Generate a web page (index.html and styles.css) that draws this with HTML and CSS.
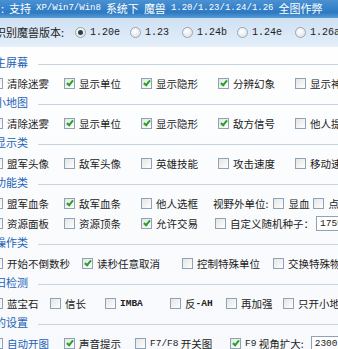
FILE: index.html
```html
<!DOCTYPE html>
<html lang="zh-CN">
<head>
    <meta charset="UTF-8">
    <title>魔兽全图作弊</title>
    <link rel="stylesheet" href="styles.css">
</head>
<body>
    <div class="window">
        <div class="titlebar">
            <span>:</span>
            <span>支持</span>
            <span class="mono">XP/Win7/Win8</span>
            <span>系统下</span>
            <span>魔兽</span>
            <span class="mono">1.20/1.23/1.24/1.26</span>
            <span>全图作弊</span>
        </div>
        <div class="versions">
            <span class="ver-label">识别魔兽版本:</span>
            <label class="radio-item"><span class="radio on"></span><span class="mono">1.20e</span></label>
            <label class="radio-item"><span class="radio"></span><span class="mono">1.23</span></label>
            <label class="radio-item"><span class="radio"></span><span class="mono">1.24b</span></label>
            <label class="radio-item"><span class="radio"></span><span class="mono">1.24e</span></label>
            <label class="radio-item"><span class="radio"></span><span class="mono">1.26a</span></label>
        </div>

        <div class="content">
            <div class="sec"><span class="sec-title">主屏幕</span><span class="sec-line"></span></div>
            <div class="row cols-main">
                <label class="opt"><span class="cb"></span>清除迷雾</label>
                <label class="opt"><span class="cb on"></span>显示单位</label>
                <label class="opt"><span class="cb on"></span>显示隐形</label>
                <label class="opt"><span class="cb on"></span>分辨幻象</label>
                <label class="opt"><span class="cb"></span>显示神符</label>
            </div>

            <div class="sec"><span class="sec-title">小地图</span><span class="sec-line"></span></div>
            <div class="row cols-main">
                <label class="opt"><span class="cb"></span>清除迷雾</label>
                <label class="opt"><span class="cb on"></span>显示单位</label>
                <label class="opt"><span class="cb on"></span>显示隐形</label>
                <label class="opt"><span class="cb on"></span>敌方信号</label>
                <label class="opt"><span class="cb"></span>他人提示</label>
            </div>

            <div class="sec"><span class="sec-title">显示类</span><span class="sec-line"></span></div>
            <div class="row cols-main">
                <label class="opt"><span class="cb"></span>盟军头像</label>
                <label class="opt"><span class="cb"></span>敌军头像</label>
                <label class="opt"><span class="cb"></span>英雄技能</label>
                <label class="opt"><span class="cb"></span>攻击速度</label>
                <label class="opt"><span class="cb"></span>移动速度</label>
            </div>

            <div class="sec"><span class="sec-title">功能类</span><span class="sec-line"></span></div>
            <div class="row cols-main">
                <label class="opt"><span class="cb"></span>盟军血条</label>
                <label class="opt"><span class="cb on"></span>敌军血条</label>
                <label class="opt"><span class="cb"></span>他人选框</label>
                <div class="opt view-out">
                    <span class="gap5">视野外单位:</span>
                    <label class="opt gap4"><span class="cb"></span>显血</label>
                    <label class="opt"><span class="cb"></span>点选</label>
                </div>
            </div>
            <div class="row cols-main">
                <label class="opt"><span class="cb"></span>资源面板</label>
                <label class="opt"><span class="cb"></span>资源顶条</label>
                <label class="opt"><span class="cb on"></span>允许交易</label>
                <div class="opt seed">
                    <span class="cb"></span><span>自定义随机种子：</span>
                    <input class="num" type="text" value="1759">
                </div>
            </div>

            <div class="sec"><span class="sec-title">操作类</span><span class="sec-line"></span></div>
            <div class="row cols-op">
                <label class="opt"><span class="cb"></span>开始不倒数秒</label>
                <label class="opt"><span class="cb on"></span>读秒任意取消</label>
                <label class="opt"><span class="cb"></span>控制特殊单位</label>
                <label class="opt"><span class="cb"></span>交换特殊物品</label>
            </div>

            <div class="sec"><span class="sec-title">旧检测</span><span class="sec-line"></span></div>
            <div class="row cols-det">
                <label class="opt"><span class="cb"></span>蓝宝石</label>
                <label class="opt"><span class="cb"></span>信长</label>
                <label class="opt"><span class="cb"></span><span class="mono bold">IMBA</span></label>
                <label class="opt"><span class="cb"></span>反<span class="mono bold">-AH</span></label>
                <label class="opt"><span class="cb"></span>再加强</label>
                <label class="opt"><span class="cb"></span>只开小地图</label>
            </div>

            <div class="sec"><span class="sec-title">的设置</span><span class="sec-line"></span></div>
            <div class="row cols-set">
                <label class="opt active"><span class="cb"></span>自动开图</label>
                <label class="opt"><span class="cb on"></span>声音提示</label>
                <label class="opt"><span class="cb"></span><span class="mono">F7/F8</span>&nbsp;开关图</label>
                <div class="opt">
                    <span class="cb on"></span><span class="mono">F9</span>&nbsp;<span class="gap5">视角扩大:</span>
                    <input class="num" type="text" value="2300">
                </div>
            </div>
        </div>
    </div>
</body>
</html>
```

FILE: styles.css
```css
body {
    margin: 0;
    padding: 0;
    background-color: #fff;
    font-family: "Noto Sans CJK SC", sans-serif;
    font-size: 10.5px;
    color: #222;
}
.window {
    width: 338px;
    height: 349px;
    overflow: hidden;
    background: linear-gradient(#fff, #f7f9fc);
}
.mono {
    font-family: "Liberation Mono", monospace;
    font-size: 9.5px;
}
.bold {
    font-weight: bold;
}

/* title bar */
.titlebar {
    height: 18px;
    line-height: 17px;
    display: flex;
    gap: 5px;
    padding-left: 1px;
    white-space: nowrap;
    color: #fff;
    font-size: 11px;
    background: linear-gradient(#4a91d2, #2c7ac3 70%, #5a9ad2);
}
.titlebar .mono {
    font-size: 9px;
}

/* version selector */
.versions {
    height: 28px;
    display: grid;
    grid-template-columns: 80px 55px 52px 55px 58px auto;
    align-items: center;
    margin-left: -5px;
    white-space: nowrap;
    background: linear-gradient(#cfe1f3, #e3eef9);
    border-bottom: 1px solid #e9f0f7;
}
.versions .mono {
    font-size: 10px;
}
.ver-label {
    font-size: 11px;
}
.radio-item {
    display: flex;
    align-items: center;
}
.radio {
    width: 11px;
    height: 11px;
    box-sizing: border-box;
    border-radius: 50%;
    border: 1px solid #9aa6b2;
    background: radial-gradient(circle at 40% 35%, #fff, #d8dde2);
    margin-right: 4px;
    display: flex;
    align-items: center;
    justify-content: center;
}
.radio.on::after {
    content: "";
    width: 5px;
    height: 5px;
    border-radius: 50%;
    background: #333c44;
}

/* sections */
.content {
    padding-top: 6px;
}
.sec {
    height: 20px;
    display: flex;
    align-items: center;
}
.sec-title {
    width: 43px;
    margin-left: -5px;
    padding-bottom: 3px;
    flex: none;
    font-size: 11px;
    color: #2462b5;
    white-space: nowrap;
    overflow: hidden;
}
.sec-line {
    flex: 1;
    border-top: 1px solid #c6d3e0;
    margin-top: 2px;
}

/* option rows */
.row {
    height: 20px;
    display: grid;
    align-items: center;
    margin-left: -8px;
    white-space: nowrap;
}
.cols-main {
    grid-template-columns: 72px 77px 77px 77px auto;
}
.cols-op {
    grid-template-columns: 90px 100px 91px auto;
}
.cols-det {
    grid-template-columns: 58px 55px 65px 56px 57px auto;
}
.cols-set {
    grid-template-columns: 72px 71px 95px auto;
}
.opt {
    display: flex;
    align-items: center;
}
.active {
    color: #2462b5;
}
.view-out {
    margin-left: -5px;
}
.seed {
    margin-left: -3px;
}
.gap5 {
    margin-right: 5px;
}
.gap4 {
    margin-right: 4px;
}

.cb {
    width: 11px;
    height: 11px;
    box-sizing: border-box;
    flex: none;
    border: 1px solid #8ea3b9;
    background: linear-gradient(135deg, #e4e6e2, #fff);
    margin-right: 4px;
    position: relative;
}
.cb.on::after {
    content: "";
    position: absolute;
    left: 3px;
    top: 0;
    width: 2px;
    height: 5px;
    border: solid #27a127;
    border-width: 0 2px 2px 0;
    transform: rotate(40deg);
}

.num {
    width: 40px;
    height: 15px;
    box-sizing: border-box;
    border: 1px solid #8ea3b9;
    padding: 0 0 0 3px;
    margin-left: 2px;
    font-family: "Liberation Mono", monospace;
    font-size: 9.5px;
    color: #222;
    background: #fff;
}
```
